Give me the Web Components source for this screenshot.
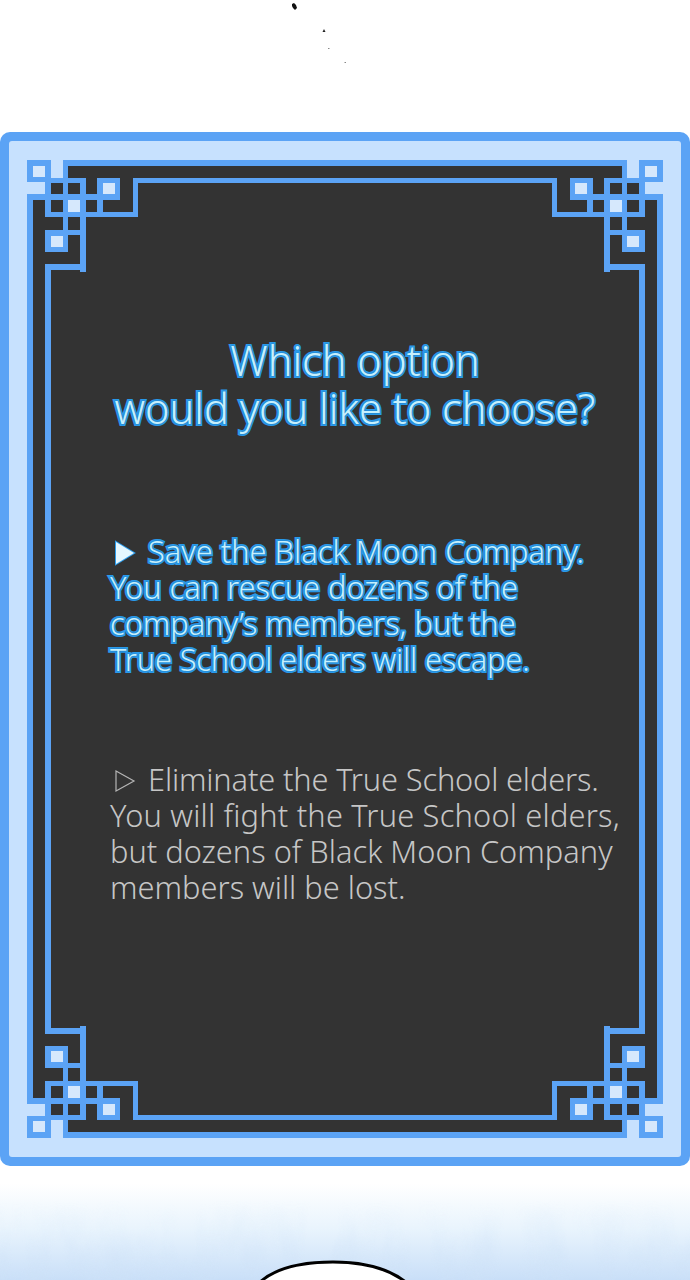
<!DOCTYPE html>
<html>
<head>
<meta charset="utf-8">
<style>
  html, body { margin: 0; padding: 0; background: #fff; }
  body { width: 690px; height: 1280px; overflow: hidden; }
</style>
</head>
<body>
<top-specks></top-specks>
<choice-card>
  <choice-title>Which option<br>would you like to choose?</choice-title>
  <choice-option selected>Save the Black Moon Company.<br>You can rescue dozens of the<br>company’s members, but the<br><span style="letter-spacing:-.13px">True School elders will escape.</span></choice-option>
  <choice-option><span style="letter-spacing:-.15px">Eliminate the True School elders.</span><br><span style="letter-spacing:.2px">You will fight the True School elders,</span><br>but dozens of Black Moon Company<br>members will be lost.</choice-option>
</choice-card>
<sky-footer></sky-footer>

<script>
class TopSpecks extends HTMLElement {
  constructor() {
    super();
    this.attachShadow({ mode: "open" }).innerHTML = `
      <style>
        :host { display: block; height: 132px; }
        svg { display: block; }
      </style>
      <svg width="690" height="132">
        <path d="M292 4l2-1 2 2 1 3-2 2-2-2-1-2z" fill="#111"/>
        <path d="M324 29l1.500 3h-3z" fill="#222"/>
        <rect x="328" y="48" width="1.500" height="1" fill="#888"/>
        <rect x="344.500" y="62" width="1.500" height="1" fill="#888"/>
      </svg>`;
  }
}

class ChoiceCard extends HTMLElement {
  constructor() {
    super();
    // one corner of the frame, page coords with the card top at y=132
    const corner = `
      <rect x="27" y="160" width="36" height="18" fill="#c7e1fe"/>
      <rect x="27" y="178" width="18" height="16" fill="#c7e1fe"/>
      <g fill="#5ba3f5">
        <rect x="63" y="160" width="282" height="6"/>
        <rect x="63" y="160" width="5" height="75"/>
        <rect x="45" y="178" width="41" height="5"/>
        <rect x="45" y="178" width="6" height="39"/>
        <rect x="27" y="194" width="73" height="6"/>
        <rect x="27" y="194" width="6" height="455"/>
        <rect x="45" y="212" width="92" height="5"/>
        <rect x="80" y="178" width="6" height="94"/>
        <rect x="45" y="264" width="41" height="6"/>
        <rect x="45" y="264" width="6" height="385"/>
        <rect x="133" y="178" width="5" height="39"/>
        <rect x="133" y="178" width="212" height="5"/>
        <rect x="97" y="178" width="6" height="39"/>
        <rect x="97" y="178" width="23" height="22"/>
        <rect x="27" y="160" width="24" height="22"/>
        <rect x="45" y="230" width="23" height="22"/>
        <rect x="68" y="230" width="12" height="5"/>
      </g>
      <g fill="#d6e8fc">
        <rect x="33" y="166" width="12" height="11"/>
        <rect x="103" y="183" width="12" height="11"/>
        <rect x="51" y="236" width="12" height="11"/>
        <rect x="68" y="200" width="12" height="12"/>
      </g>`;
    this.attachShadow({ mode: "open" }).innerHTML = `
      <style>
        :host {
          display: grid;
          width: 690px;
          height: 1034px;
          box-sizing: border-box;
          background: #5ba3f5;
          border-radius: 10px;
        }
        svg, .body { grid-area: 1 / 1; }
        svg { display: block; }
        .body {
          display: flex;
          flex-direction: column;
          padding: 204px 0 0 110px;
        }
      </style>
      <svg width="690" height="1034" viewBox="0 132 690 1034">
        <defs><g id="corner">${corner}</g></defs>
        <rect x="9" y="141" width="672" height="1016" rx="3" fill="#c7e1fe"/>
        <rect x="27" y="160" width="636" height="978" fill="#333"/>
        <use href="#corner"/>
        <use href="#corner" transform="translate(690 0) scale(-1 1)"/>
        <use href="#corner" transform="translate(0 1298) scale(1 -1)"/>
        <use href="#corner" transform="translate(690 1298) scale(-1 -1)"/>
      </svg>
      <div class="body"><slot></slot></div>`;
  }
}

class ChoiceTitle extends HTMLElement {
  constructor() {
    super();
    this.attachShadow({ mode: "open" }).innerHTML = `
      <style>
        :host {
          display: block;
          width: 490px;
          height: 148px;
          margin-bottom: 49px;
          text-align: center;
          font: 300 41.500px/48px "Noto Sans", sans-serif;
          color: #c6f0fd;
          -webkit-text-stroke: 4px #2b9cec;
          paint-order: stroke fill;
          text-shadow: 0 0 2px #14609f;
          white-space: nowrap;
        }
      </style>
      <slot></slot>`;
  }
}

class ChoiceOption extends HTMLElement {
  constructor() {
    super();
    const picked = this.hasAttribute("selected");
    this.attachShadow({ mode: "open" }).innerHTML = `
      <style>
        :host {
          display: block;
          height: 228px;
          font: 300 30.800px/36px "Noto Sans", sans-serif;
          color: ${picked ? "#c6f0fd" : "#c6c6c6"};
          white-space: nowrap;
          ${picked ? "-webkit-text-stroke: 4px #2b9cec; paint-order: stroke fill; text-shadow: 0 0 2px #14609f;" : ""}
        }
        svg { display: inline-block; vertical-align: -3px; margin: 0 12px 0 4px; }
      </style>
      <svg width="22" height="26" viewBox="0 0 22 26">
        ${picked
          ? '<path d="M2 2L20 13L2 24z" fill="#e6f8ff" stroke="#2b9cec" stroke-width="2"/>'
          : '<path d="M2 3L20 13L2 23z" fill="none" stroke="#b5b5b5" stroke-width="1.200"/>'}
      </svg><slot></slot>`;
  }
}

class SkyFooter extends HTMLElement {
  constructor() {
    super();
    this.attachShadow({ mode: "open" }).innerHTML = `
      <style>
        :host { display: block; height: 114px; overflow: hidden; }
        svg { display: block; }
      </style>
      <svg width="690" height="114">
        <defs>
          <linearGradient id="sky" x1="0" y1="0" x2="0" y2="1">
            <stop offset="0.15" stop-color="#fff"/>
            <stop offset="0.55" stop-color="#e9f4fd"/>
            <stop offset="1" stop-color="#c9dff8"/>
          </linearGradient>
          <linearGradient id="fade" x1="0" y1="0" x2="0" y2="1">
            <stop offset="0.3" stop-color="#000"/>
            <stop offset="1" stop-color="#fff"/>
          </linearGradient>
          <mask id="m"><rect width="690" height="114" fill="url(#fade)"/></mask>
          <filter id="cloud" x="0" y="0" width="100%" height="100%">
            <feTurbulence type="fractalNoise" baseFrequency="0.03 0.012" numOctaves="4" seed="7"/>
            <feColorMatrix values="0 0 0 0 0.62  0 0 0 0 0.76  0 0 0 0 0.93  1.800 0 0 0 -0.700"/>
          </filter>
        </defs>
        <rect width="690" height="114" fill="url(#sky)"/>
        <rect width="690" height="114" filter="url(#cloud)" mask="url(#m)" opacity="0.7"/>
        <path d="M258 118C272 104 298 96 333 96C368 96 392 104 408 118z" fill="#fff" stroke="#000" stroke-width="3"/>
      </svg>`;
  }
}

customElements.define("top-specks", TopSpecks);
customElements.define("choice-card", ChoiceCard);
customElements.define("choice-title", ChoiceTitle);
customElements.define("choice-option", ChoiceOption);
customElements.define("sky-footer", SkyFooter);
</script>
</body>
</html>
